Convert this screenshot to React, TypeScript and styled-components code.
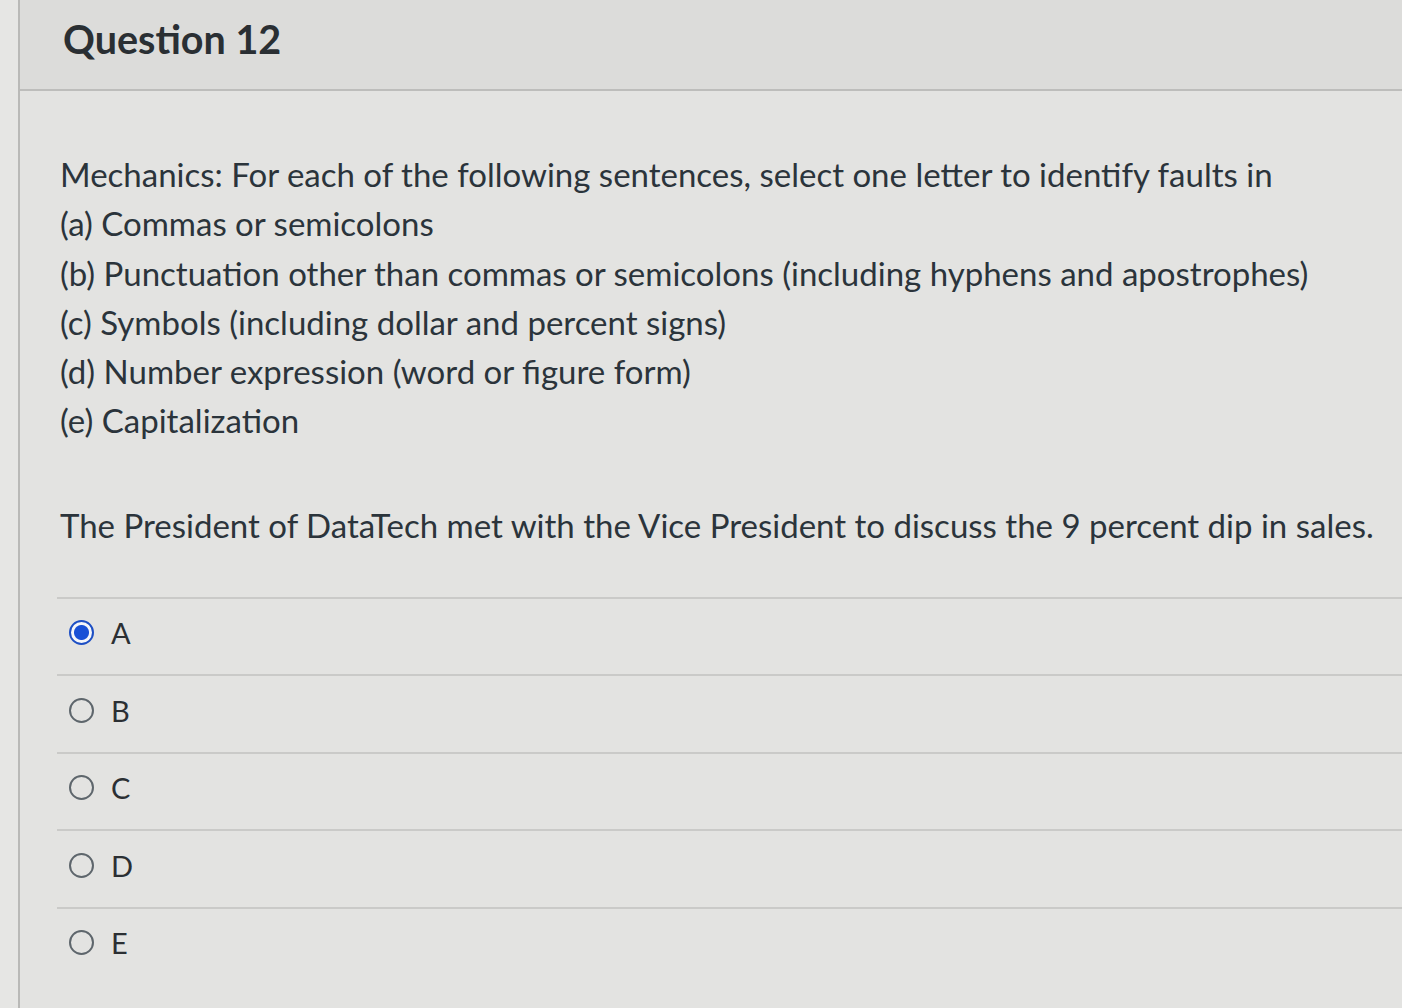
import React, { useState } from 'react';
import styled, { createGlobalStyle } from 'styled-components';

const GlobalStyle = createGlobalStyle`
    html, body {
        margin: 0;
        padding: 0;
        background: #e3e3e1;
        font-family: Lato, "Open Sans", "Liberation Sans", sans-serif;
        color: #2b343b;
    }
`;

const letters = ['A', 'B', 'C', 'D', 'E'];

const faults = [
    '(a) Commas or semicolons',
    '(b) Punctuation other than commas or semicolons (including hyphens and apostrophes)',
    '(c) Symbols (including dollar and percent signs)',
    '(d) Number expression (word or figure form)',
    '(e) Capitalization',
];

const App: React.FC = () => {
    const [picked, setPicked] = useState('A');

    return (
        <>
            <GlobalStyle />
            <Page>
                <Gutter />
                <Main>
                    <Header>
                        <Title>Question 12</Title>
                    </Header>
                    <Body>
                        <Prompt>
                            <Line>Mechanics: For each of the following sentences, select one letter to identify faults in</Line>
                            {faults.map((f) => (
                                <Line key={f}>{f}</Line>
                            ))}
                        </Prompt>
                        <Sentence>
                            The President of DataTech met with the Vice President to discuss the 9 percent dip in sales.
                        </Sentence>
                        <Answers>
                            {letters.map((l) => (
                                <Answer key={l} onClick={() => setPicked(l)}>
                                    <Radio $checked={picked === l} />
                                    <Letter>{l}</Letter>
                                </Answer>
                            ))}
                        </Answers>
                    </Body>
                </Main>
            </Page>
        </>
    );
};

const Page = styled.div`
    display: flex;
    height: 1008px;
    overflow: hidden;
`;

const Gutter = styled.div`
    width: 18px;
    flex-shrink: 0;
    background: #e6e6e4;
    border-right: 2px solid #b9b9b7;
`;

const Main = styled.div`
    flex: 1;
    display: flex;
    flex-direction: column;
`;

const Header = styled.div`
    height: 91px;
    background: #dcdcda;
    border-bottom: 2px solid #bdbdbb;
    padding-left: 43px;
    display: flex;
    align-items: center;
    box-sizing: border-box;
`;

const Title = styled.h1`
    margin: 0 0 12px;
    font-size: 39.5px;
    font-weight: 700;
    color: #2a2f33;
`;

const Body = styled.div`
    padding: 59px 0 0 40px;
`;

const Prompt = styled.div`
    font-size: 33px;
    line-height: 49.3px;
`;

const Line = styled.div`
    white-space: nowrap;
`;

const Sentence = styled.p`
    margin: 55px 0 0;
    font-size: 33px;
    line-height: 49px;
    white-space: nowrap;
`;

const Answers = styled.div`
    margin: 47px 0 0 -3px;
`;

const Answer = styled.label`
    display: flex;
    align-items: center;
    gap: 17px;
    height: 77.5px;
    padding: 0 0 8px 12px;
    box-sizing: border-box;
    border-top: 2px solid #cacac8;
    cursor: pointer;
`;

const Radio = styled.span<{ $checked: boolean }>`
    width: 25px;
    height: 25px;
    border-radius: 50%;
    box-sizing: border-box;
    border: 2px solid ${(p) => (p.$checked ? '#1d4fc4' : '#5e666c')};
    background: ${(p) => (p.$checked ? 'radial-gradient(circle, #1850d6 0 7px, #f4f6fa 8px)' : 'transparent')};
    flex-shrink: 0;
`;

const Letter = styled.span`
    font-size: 29px;
    color: #2b2f33;
`;

export default App;
